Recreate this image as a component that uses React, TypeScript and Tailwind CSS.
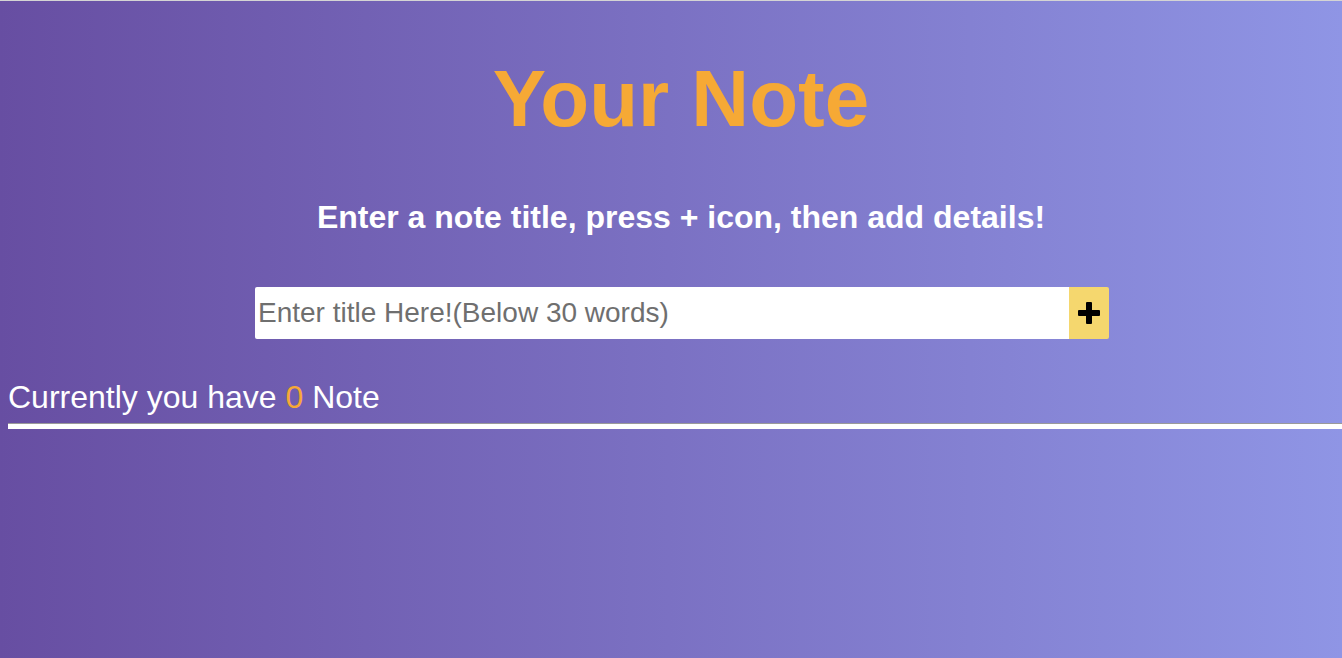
export default function App() {
  return (
    <div
      className="min-h-[658px] w-full border-t border-[#d4d4d4] bg-gradient-to-r from-[#674ea2] to-[#8f95e5] overflow-hidden"
      style={{ fontFamily: '"Liberation Sans", Arial, sans-serif' }}
    >
      <div className="flex flex-col items-center pl-[20px]">
        <h1 className="mt-[48px] text-[80px] leading-[100px] font-bold text-[#f6a935]">Your Note</h1>
        <p className="mt-[50px] text-[32px] leading-[36px] font-bold text-white">
          Enter a note title, press + icon, then add details!
        </p>
        <div className="ml-[2px] mt-[52px] flex h-[52px] w-[854px]">
          <input
            type="text"
            placeholder="Enter title Here!(Below 30 words)"
            className="h-full flex-1 rounded-l-[2px] bg-white px-[3px] text-[28px] text-black outline-none placeholder:text-[#6f6f6f]"
            style={{ fontFamily: '"Liberation Sans", Arial, sans-serif' }}
          />
          <button className="flex h-full w-[40px] items-center justify-center rounded-r-[2px] bg-[#f5d76e]">
            <svg width="22" height="22" viewBox="0 0 22 22">
              <rect x="8" y="0" width="6" height="22" rx="1" fill="#000" />
              <rect x="0" y="8" width="22" height="6" rx="1" fill="#000" />
            </svg>
          </button>
        </div>
      </div>
      <div className="mt-[38px] pl-[8px] text-[32px] leading-[40px] text-white">
        Currently you have <span className="text-[#f6a935]">0</span> Note
      </div>
      <div className="ml-[8px] mt-[6px] h-[6px] border-t border-[#9a9a9a] bg-white" />
    </div>
  );
}
